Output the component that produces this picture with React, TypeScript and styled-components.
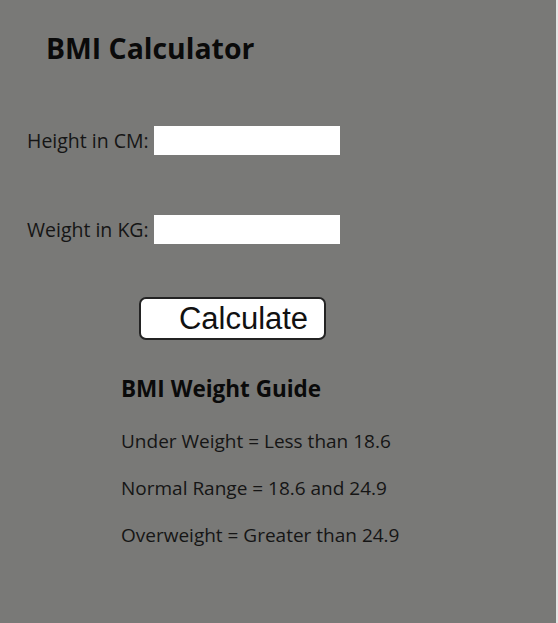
import React from "react";
import styled, { createGlobalStyle } from "styled-components";

const Global = createGlobalStyle`
  html, body { margin: 0; padding: 0; background: #e6e6e6; }
  #root { width: 556px; }
`;

const Page = styled.main`
  background: #797977;
  min-height: 623px;
  box-sizing: border-box;
  padding: 27px 0 0 27px;
  font-family: "Open Sans", "Noto Sans", sans-serif;
  color: #111;
`;

const Title = styled.h1`
  margin: 0 0 0 19px;
  font-size: 28.4px;
  line-height: 42px;
  font-weight: 700;
  color: #0a0a0a;
`;

const Form = styled.form`
  display: flex;
  flex-direction: column;
  margin-top: 57px;
`;

const Row = styled.label<{ $gap: number }>`
  display: flex;
  align-items: center;
  gap: 5px;
  height: 29px;
  margin-bottom: ${(p) => p.$gap}px;
  font-size: 19.5px;
  color: #151515;
`;

const Field = styled.input`
  width: 186px;
  height: 29px;
  border: none;
  box-sizing: border-box;
  background: #fff;
  margin: 0;
  padding: 0 4px;
  outline: none;
`;

const ButtonRow = styled.div`
  padding-left: 112px;
  margin-top: 0;
`;

const CalcButton = styled.button`
  width: 187px;
  height: 43px;
  box-sizing: border-box;
  background: #fff;
  border: 2px solid #232323;
  border-radius: 7px;
  font-family: "Liberation Sans", Arial, sans-serif;
  font-size: 31px;
  color: #111;
  padding: 0 0 0 22px;
  text-align: center;
  cursor: pointer;
`;

const Guide = styled.section`
  margin: 34px 0 0 94px;
`;

const GuideTitle = styled.h3`
  margin: 0 0 14px;
  font-size: 22.5px;
  line-height: 30px;
  font-weight: 700;
  color: #0a0a0a;
`;

const GuideLine = styled.p`
  margin: 0;
  font-size: 19px;
  line-height: 47px;
  color: #151515;
`;

export default function App() {
  return (
    <>
      <Global />
      <Page>
        <Title>BMI Calculator</Title>
        <Form onSubmit={(e) => e.preventDefault()}>
          <Row $gap={60}>
            Height in CM: <Field type="text" />
          </Row>
          <Row $gap={53}>
            Weight in KG: <Field type="text" />
          </Row>
          <ButtonRow>
            <CalcButton type="submit">Calculate</CalcButton>
          </ButtonRow>
        </Form>
        <Guide>
          <GuideTitle>BMI Weight Guide</GuideTitle>
          <GuideLine>Under Weight = Less than 18.6</GuideLine>
          <GuideLine>Normal Range = 18.6 and 24.9</GuideLine>
          <GuideLine>Overweight = Greater than 24.9</GuideLine>
        </Guide>
      </Page>
    </>
  );
}
